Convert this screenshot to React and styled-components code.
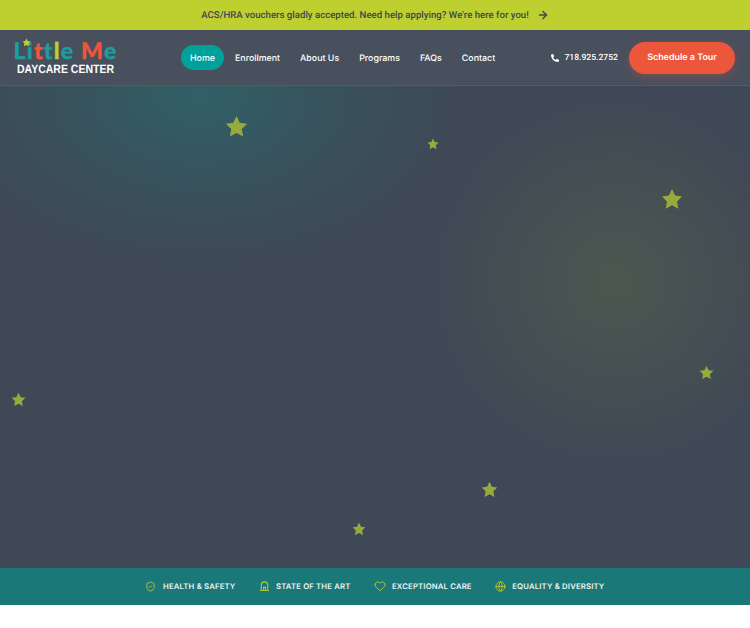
import React from "react";
import styled, { createGlobalStyle } from "styled-components";
import { ArrowRight, ShieldCheck, Heart, Globe } from "lucide-react";
import { FaPhoneAlt } from "react-icons/fa";

const GlobalStyle = createGlobalStyle`
  html, body {
    margin: 0;
    padding: 0;
    background: #fff;
    font-family: "Inter", sans-serif;
    text-rendering: geometricPrecision;
  }
`;

const Promo = styled.div`
  height: 30px;
  background: #bdd030;
  display: flex;
  align-items: center;
  justify-content: center;
  gap: 8px;
  color: #3f4653;
  font-family: "Roboto", sans-serif;
  font-size: 9.65px;
  font-weight: 500;
  white-space: nowrap;
`;

const Header = styled.header`
  height: 56px;
  box-sizing: border-box;
  background: #484f5d;
  border-bottom: 1px solid #535b68;
  display: flex;
  align-items: center;
  padding: 0 15px;
`;

const Logo = styled.div`
  width: 101px;
  flex: none;
  display: flex;
  flex-direction: column;
  align-items: center;
  gap: 5px;
`;

const LogoTop = styled.div`
  position: relative;
  display: flex;
  height: 19px;
  font-family: "Lato", sans-serif;
  font-size: 23px;
  font-weight: 900;
  line-height: 19px;
  letter-spacing: 1.2px;
  white-space: pre;
  -webkit-text-stroke: 0.3px currentColor;
`;

const LogoLetter = styled.span`
  display: block;
  height: 19px;
  overflow: visible;
  color: ${(p) => p.$color};
`;

const LogoBottom = styled.div`
  font-family: "Liberation Sans", sans-serif;
  font-size: 10.5px;
  font-weight: 700;
  line-height: 10px;
  color: #fff;
  white-space: nowrap;
  transform: scaleY(1.15);
`;

const LogoStar = styled.svg`
  position: absolute;
  left: 9px;
  top: -3px;
`;

const Nav = styled.nav`
  display: flex;
  align-items: center;
  gap: 2px;
  margin-left: 65px;
`;

const NavItem = styled.a`
  height: 25px;
  padding: 1px 9px 0;
  box-sizing: border-box;
  border-radius: 13px;
  display: flex;
  align-items: center;
  font-size: 8.85px;
  font-weight: 500;
  color: #fff;
  white-space: nowrap;
  background: ${(p) => (p.$active ? "#00a19a" : "transparent")};
`;

const Right = styled.div`
  margin-left: auto;
  display: flex;
  align-items: center;
`;

const PhoneLink = styled.a`
  display: flex;
  align-items: center;
  gap: 5px;
  color: #fff;
  font-family: "Roboto", sans-serif;
  font-size: 8.6px;
  font-weight: 500;
  margin-right: 11px;
  white-space: nowrap;
`;

const TourButton = styled.a`
  width: 106px;
  height: 32px;
  border-radius: 16px;
  background: #ec573c;
  box-shadow: 0 3px 10px rgba(236, 87, 60, 0.3);
  display: flex;
  align-items: center;
  justify-content: center;
  color: #fff;
  font-size: 8.95px;
  font-weight: 600;
  white-space: nowrap;
`;

const Hero = styled.section`
  position: relative;
  height: 482px;
  overflow: hidden;
  background:
    radial-gradient(ellipse 260px 170px at 200px 10px, rgba(30, 125, 120, 0.45), rgba(30, 125, 120, 0.22) 45%, rgba(30, 125, 120, 0) 100%),
    radial-gradient(ellipse 190px 190px at 615px 195px, rgba(120, 135, 60, 0.24), rgba(120, 135, 60, 0.12) 50%, rgba(120, 135, 60, 0) 100%),
    #3f4856;
`;

const Star = styled.svg`
  position: absolute;
  left: ${(p) => p.$x - p.$size / 2}px;
  top: ${(p) => p.$y - p.$size / 2}px;
  width: ${(p) => p.$size}px;
  height: ${(p) => p.$size}px;
  fill: #97ab3c;
`;

const Band = styled.div`
  height: 37px;
  padding-bottom: 1px;
  box-sizing: border-box;
  background: #1a7878;
  display: flex;
  align-items: center;
  justify-content: center;
  gap: 23px;
`;

const BandItem = styled.div`
  display: flex;
  align-items: center;
  gap: 6.5px;
  color: #eef4f4;
  font-size: 7.72px;
  font-weight: 600;
  letter-spacing: 0.17px;
  text-transform: uppercase;
  white-space: nowrap;
  svg {
    color: #bdd030;
  }
`;

const stars = [
  { x: 236, y: 40.5, size: 23 },
  { x: 433, y: 58, size: 12 },
  { x: 672, y: 112.5, size: 22 },
  { x: 706, y: 286, size: 15 },
  { x: 18, y: 313, size: 15 },
  { x: 489, y: 403.5, size: 17 },
  { x: 359, y: 442.5, size: 14 },
];

const navLinks = ["Home", "Enrollment", "About Us", "Programs", "FAQs", "Contact"];

const logoLetters = [
  ["L", "#1f9c9c"],
  ["i", "#1f9c9c"],
  ["t", "#ec573c"],
  ["t", "#1f9c9c"],
  ["l", "#bdd030"],
  ["e", "#1f9c9c"],
  [" ", "#fff"],
  ["M", "#ec573c"],
  ["e", "#1f9c9c"],
];

function ArchIcon() {
  return (
    <svg width="11" height="12" viewBox="0 0 12 12" fill="none" stroke="currentColor" strokeWidth="1.1">
      <path d="M2.5 10V5a3.5 3.5 0 0 1 7 0V10" />
      <path d="M1 10.8h10" />
      <path d="M5 10V7.5h2V10" />
    </svg>
  );
}

export default function App() {
  return (
    <>
      <GlobalStyle />
      <Promo>
        <span>ACS/HRA vouchers gladly accepted. Need help applying? We're here for you!</span>
        <ArrowRight size={12} strokeWidth={3} />
      </Promo>
      <Header>
        <Logo>
          <LogoTop>
            {logoLetters.map(([ch, color], i) => (
              <LogoLetter key={i} $color={color}>
                {ch}
              </LogoLetter>
            ))}
            <LogoStar width="9" height="9" viewBox="0 0 24 24" fill="#bdd030">
              <path d="M12 1l3.4 7 7.6 1-5.5 5.3 1.3 7.7-6.8-3.6-6.8 3.6 1.3-7.7L1 9l7.6-1z" />
            </LogoStar>
          </LogoTop>
          <LogoBottom>DAYCARE CENTER</LogoBottom>
        </Logo>
        <Nav>
          {navLinks.map((link, i) => (
            <NavItem key={link} $active={i === 0}>
              {link}
            </NavItem>
          ))}
        </Nav>
        <Right>
          <PhoneLink>
            <FaPhoneAlt size={8} />
            718.925.2752
          </PhoneLink>
          <TourButton>Schedule a Tour</TourButton>
        </Right>
      </Header>
      <Hero>
        {stars.map((s, i) => (
          <Star key={i} $x={s.x} $y={s.y} $size={s.size} viewBox="0 0 24 24">
            <path d="M12 1l3.4 7.2 7.6 1-5.5 5.4 1.4 7.9-6.9-3.8-6.9 3.8 1.4-7.9L1 9.2l7.6-1z" />
          </Star>
        ))}
      </Hero>
      <Band>
        <BandItem>
          <ShieldCheck size={11} strokeWidth={1.8} />
          Health &amp; Safety
        </BandItem>
        <BandItem>
          <ArchIcon />
          State of the Art
        </BandItem>
        <BandItem>
          <Heart size={12} strokeWidth={1.8} />
          Exceptional Care
        </BandItem>
        <BandItem>
          <Globe size={11} strokeWidth={1.8} />
          Equality &amp; Diversity
        </BandItem>
      </Band>
    </>
  );
}
